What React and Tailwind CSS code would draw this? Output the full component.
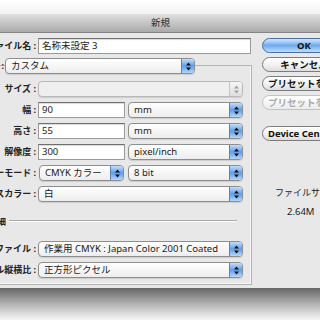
import React from 'react';
import clsx from 'clsx';

const Stepper = ({ disabled }) => (
  <div
    className={clsx(
      'w-[13px] h-full flex items-center justify-center border-l',
      disabled
        ? 'bg-linear-to-b from-[#f6f6f6] to-[#dedede] border-[#c4c4c4]'
        : 'bg-linear-to-b from-[#c3defc] via-[#5e9de8] to-[#b2d6fb] border-[#5a82b6]'
    )}
  >
    <svg width="5" height="9" viewBox="0 0 5 9">
      <path d="M2.5 0.5 L5 3.5 L0 3.5Z M0 5.5 L5 5.5 L2.5 8.5Z" fill={disabled ? '#a0a0a0' : '#111'} />
    </svg>
  </div>
);

const Select = ({ value, w, disabled }) => (
  <div
    className={clsx(
      'flex h-[16px] rounded-[4px] border overflow-hidden shadow-[0_1px_1px_rgba(0,0,0,0.12)]',
      disabled ? 'border-[#b9b9b9] bg-[#efefef]' : 'border-[#8e8e8e] bg-linear-to-b from-white to-[#ededed]',
      w
    )}
  >
    <span className="flex-1 pl-[5px] text-[9.5px] leading-[14px] text-[#1a1a1a] whitespace-nowrap overflow-hidden">{value}</span>
    <Stepper disabled={disabled} />
  </div>
);

const Input = ({ value, w }) => (
  <div
    className={clsx(
      'h-[16px] bg-white border border-[#9a9a9a] border-t-[#6f6f6f] shadow-[inset_0_1px_1px_rgba(0,0,0,0.15)] pl-[3px] text-[9.5px] leading-[14px] text-[#1a1a1a] whitespace-nowrap',
      w
    )}
  >
    {value}
  </div>
);

const Label = ({ text, w = 'w-[36px]' }) => (
  <div className={clsx('flex justify-end shrink-0 whitespace-nowrap text-[9px] font-bold text-[#222] leading-[14px] mr-[2px]', w)}>
    <span>{text}</span>
  </div>
);

const Button = ({ text, blue, disabled, left, className }) => (
  <div
    className={clsx(
      'w-[86px] h-[15px] rounded-full border flex items-center whitespace-nowrap text-[9.5px] font-bold leading-none shrink-0',
      left ? 'justify-start pl-[5px]' : 'justify-center pr-[2px]',
      blue
        ? 'border-[#4a6e9e] bg-linear-to-b from-[#d2e7fd] via-[#6daaf0] to-[#bfe0fe] text-[#111]'
        : disabled
        ? 'border-[#c2c2c2] bg-linear-to-b from-white to-[#ececec] text-[#a9a9a9]'
        : 'border-[#7c7c7c] bg-linear-to-b from-white via-[#f3f3f3] to-[#dddddd] text-[#111]',
      className
    )}
  >
    {text}
  </div>
);

export default function App() {
  return (
    <div className="w-[320px] h-[320px] overflow-hidden bg-white flex flex-col font-['Noto_Sans','Noto_Sans_CJK_JP',sans-serif]">
      <div className="h-[14px] shrink-0 bg-linear-to-b from-white to-[#f2f2f2]" />
      <div className="h-[19px] shrink-0 bg-linear-to-b from-[#e0e0e0] to-[#aaaaaa] border-b border-[#858585] flex items-center pl-[151px] text-[9.5px] text-[#2a2a2a]">
        新規
      </div>
      <div className="h-[255px] shrink-0 bg-[#e8e8e8] flex">
        <div className="w-[252px] shrink-0 flex flex-col">
          <div className="flex items-center mt-[5px]">
            <Label text="ファイル名 :" />
            <Input value="名称未設定 3" w="w-[213px]" />
          </div>
          <div className="mt-[11px] border-t border-r border-b border-[#b3b3b3] shadow-[inset_-1px_-1px_0_#f7f7f7] pb-[6px] flex flex-col">
            <div className="flex items-center -mt-[8px]">
              <Label text="プリセット :" w="w-[4px]" />
              <div className="-ml-[1px]">
                <Select value="カスタム" w="w-[190px]" />
              </div>
            </div>
            <div className="flex items-center mt-[7px]">
              <Label text="サイズ :" />
              <Select value="" w="w-[205px]" disabled />
            </div>
            <div className="flex items-center mt-[5px]">
              <Label text="幅 :" />
              <Input value="90" w="w-[87px]" />
              <div className="ml-[3px]"><Select value="mm" w="w-[115px]" /></div>
            </div>
            <div className="flex items-center mt-[5px]">
              <Label text="高さ :" />
              <Input value="55" w="w-[87px]" />
              <div className="ml-[3px]"><Select value="mm" w="w-[115px]" /></div>
            </div>
            <div className="flex items-center mt-[5px]">
              <Label text="解像度 :" />
              <Input value="300" w="w-[87px]" />
              <div className="ml-[3px]"><Select value="pixel/inch" w="w-[115px]" /></div>
            </div>
            <div className="flex items-center mt-[5px]">
              <Label text="カラーモード :" />
              <div className="ml-[1px]"><Select value="CMYK カラー" w="w-[85px]" /></div>
              <div className="ml-[4px]"><Select value="8 bit" w="w-[115px]" /></div>
            </div>
            <div className="flex items-center mt-[5px]">
              <Label text="カンバスカラー :" />
              <Select value="白" w="w-[205px]" />
            </div>
            <div className="flex items-center mt-[13px] h-[12px] mr-[14px]">
              <span className="-ml-[12px] text-[9px] font-bold text-[#222] leading-none whitespace-nowrap">詳細</span>
              <div className="flex-1 ml-[3px] h-[2px] border-t border-[#a9a9a9] border-b-white border-b" />
            </div>
            <div className="flex items-center mt-[14px]">
              <Label text="カラープロファイル :" />
              <Select value="作業用 CMYK :  Japan Color 2001 Coated" w="w-[205px]" />
            </div>
            <div className="flex items-center mt-[5px]">
              <Label text="ピクセル縦横比 :" />
              <Select value="正方形ピクセル" w="w-[205px]" />
            </div>
          </div>
        </div>
        <div className="flex flex-col pl-[10px]">
          <Button text="OK" blue className="mt-[5px]" />
          <Button text="キャンセル" className="mt-[4px]" />
          <Button text="プリセットを保存..." left className="mt-[4px]" />
          <Button text="プリセットを削除..." left disabled className="mt-[4px]" />
          <Button text="Device Central..." left className="mt-[16px]" />
          <div className="mt-[46px] pl-[13px] text-[9px] text-[#222] leading-[12px] whitespace-nowrap">ファイルサイズ :</div>
          <div className="mt-[7px] pl-[25px] text-[9.5px] text-[#222] leading-[12px] whitespace-nowrap">2.64M</div>
        </div>
      </div>
      <div className="flex-1 bg-linear-to-b from-[#666666] via-[#b4b4b4] to-[#f7f7f7]" />
    </div>
  );
}
